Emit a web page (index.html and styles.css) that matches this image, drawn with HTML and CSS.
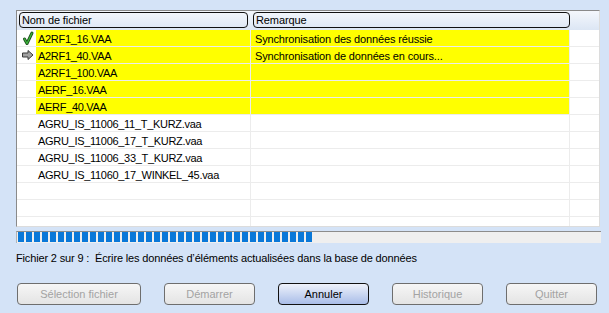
FILE: index.html
```html
<!DOCTYPE html>
<html lang="fr">
<head>
  <meta charset="UTF-8" />
  <title>Synchronisation des fichiers</title>
  <link rel="stylesheet" href="styles.css">
</head>
<body>
  <div class="dialogue">
    <div class="liste">
      <div class="entete">
        <div class="col-nom-entete"><span class="bouton-entete">Nom de fichier</span></div>
        <div class="col-remarque-entete"><span class="bouton-entete">Remarque</span></div>
        <div class="col-vide-entete"></div>
      </div>

      <div class="ligne jaune">
        <div class="icone">
          <svg width="19" height="16" viewBox="0 0 19 16">
            <polyline points="7.5,9 10,13.5 15,3" fill="none" stroke="#1d4f1d" stroke-width="3" stroke-linecap="round" stroke-linejoin="round"/>
            <polyline points="7.5,9 10,13.5 15,3" fill="none" stroke="#3dbb3d" stroke-width="1.2" stroke-linecap="round" stroke-linejoin="round"/>
          </svg>
        </div>
        <div class="nom">A2RF1_16.VAA</div>
        <div class="remarque">Synchronisation des données réussie</div>
        <div class="vide"></div>
      </div>
      <div class="ligne jaune">
        <div class="icone">
          <svg width="19" height="16" viewBox="0 0 19 16">
            <polygon points="5.5,6 11,6 11,3.5 16,8 11,12.5 11,10 5.5,10" fill="#a2a2a2" stroke="#3a3a3a" stroke-width="1" stroke-linejoin="round"/>
          </svg>
        </div>
        <div class="nom">A2RF1_40.VAA</div>
        <div class="remarque">Synchronisation de données en cours...</div>
        <div class="vide"></div>
      </div>
      <div class="ligne jaune">
        <div class="icone"></div>
        <div class="nom">A2RF1_100.VAA</div>
        <div class="remarque"></div>
        <div class="vide"></div>
      </div>
      <div class="ligne jaune">
        <div class="icone"></div>
        <div class="nom">AERF_16.VAA</div>
        <div class="remarque"></div>
        <div class="vide"></div>
      </div>
      <div class="ligne jaune">
        <div class="icone"></div>
        <div class="nom">AERF_40.VAA</div>
        <div class="remarque"></div>
        <div class="vide"></div>
      </div>
      <div class="ligne">
        <div class="icone"></div>
        <div class="nom">AGRU_IS_11006_11_T_KURZ.vaa</div>
        <div class="remarque"></div>
        <div class="vide"></div>
      </div>
      <div class="ligne">
        <div class="icone"></div>
        <div class="nom">AGRU_IS_11006_17_T_KURZ.vaa</div>
        <div class="remarque"></div>
        <div class="vide"></div>
      </div>
      <div class="ligne">
        <div class="icone"></div>
        <div class="nom">AGRU_IS_11006_33_T_KURZ.vaa</div>
        <div class="remarque"></div>
        <div class="vide"></div>
      </div>
      <div class="ligne">
        <div class="icone"></div>
        <div class="nom">AGRU_IS_11060_17_WINKEL_45.vaa</div>
        <div class="remarque"></div>
        <div class="vide"></div>
      </div>
      <div class="ligne">
        <div class="icone"></div>
        <div class="nom"></div>
        <div class="remarque"></div>
        <div class="vide"></div>
      </div>
      <div class="ligne">
        <div class="icone"></div>
        <div class="nom"></div>
        <div class="remarque"></div>
        <div class="vide"></div>
      </div>
      <div class="ligne">
        <div class="icone"></div>
        <div class="nom"></div>
        <div class="remarque"></div>
        <div class="vide"></div>
      </div>
    </div>

    <div class="progression">
      <div class="barre" style="width: 294px;"></div>
    </div>

    <p class="statut">Fichier 2 sur 9 :&nbsp; Écrire les données d’éléments actualisées dans la base de données</p>

    <div class="boutons">
      <button class="bouton large" disabled>Sélection fichier</button>
      <button class="bouton" disabled>Démarrer</button>
      <button class="bouton actif">Annuler</button>
      <button class="bouton" disabled>Historique</button>
      <button class="bouton" disabled>Quitter</button>
    </div>
  </div>
</body>
</html>
```

FILE: styles.css
```css
body {
  margin: 0;
  background-color: #d4e3f7;
  font-family: "Liberation Sans", Arial, sans-serif;
  font-size: 11px;
  color: #000;
}

.dialogue {
  padding: 10px 0 0 16px;
}

.liste {
  width: 582px;
  height: 215px;
  overflow: hidden;
  background-color: #fff;
  border: 1px solid;
  border-color: #8a8a8a #dcdcdc #dcdcdc #8a8a8a;
}

.entete {
  display: flex;
  height: 19px;
  background: linear-gradient(#f4f7fc, #dce6f4);
}

.col-nom-entete {
  width: 234px;
  padding: 1px 0 0 2px;
}

.col-remarque-entete {
  width: 319px;
  padding: 1px 0 0 0;
}

.col-vide-entete {
  flex: 1;
}

.bouton-entete { /* colonne avec cadre arrondi */
  display: block;
  height: 14px;
  line-height: 15px;
  padding-left: 2px;
  border: 1px solid #111;
  border-radius: 4px;
  margin-right: 1px;
  letter-spacing: -0.1px;
}

.col-nom-entete .bouton-entete {
  width: 225px;
}

.col-remarque-entete .bouton-entete {
  width: 313px;
}

.ligne {
  display: flex;
  height: 16px;
  line-height: 18px;
  border-bottom: 1px solid #ececec;
}

.icone {
  width: 19px;
  height: 16px;
}

.icone svg {
  display: block;
}

.nom {
  width: 212px;
  padding-left: 2px;
  border-right: 1px solid #ececec;
  white-space: nowrap;
  letter-spacing: -0.3px;
}

.remarque {
  width: 314px;
  padding-left: 4px;
  border-right: 1px solid #ececec;
  white-space: nowrap;
  letter-spacing: -0.15px;
}

.vide {
  flex: 1;
}

.jaune .nom,
.jaune .remarque {
  background-color: #ffff00;
}

.progression {
  width: 583px;
  height: 10px;
  margin-top: 4px;
  padding: 0 0 1px 1px;
  background-color: #efefef;
  border-top: 1px solid #8c8c8c;
  border-left: 1px solid #b4b4b4;
}

.barre {
  height: 10px;
  background: repeating-linear-gradient(90deg, #0a78d8 0 6px, transparent 6px 8px);
}

.statut {
  margin: 8px 0 0 0;
  line-height: 14px;
  letter-spacing: -0.15px;
}

.boutons {
  display: flex;
  gap: 23px;
  margin-top: 18px;
  padding-left: 1px;
}

.bouton {
  width: 91px;
  height: 22px;
  padding: 0;
  font-family: inherit;
  font-size: 11px;
  color: #a3a3a3;
  background: linear-gradient(#f6f6f6, #e4e4e4);
  border: 1px solid #6e6e6e;
  border-radius: 4px;
}

.bouton.large {
  width: 124px;
}

.bouton.actif { /* seul bouton utilisable */
  color: #000;
  border-color: #111;
  background: linear-gradient(#eef2fb, #a9bde8);
}
```
